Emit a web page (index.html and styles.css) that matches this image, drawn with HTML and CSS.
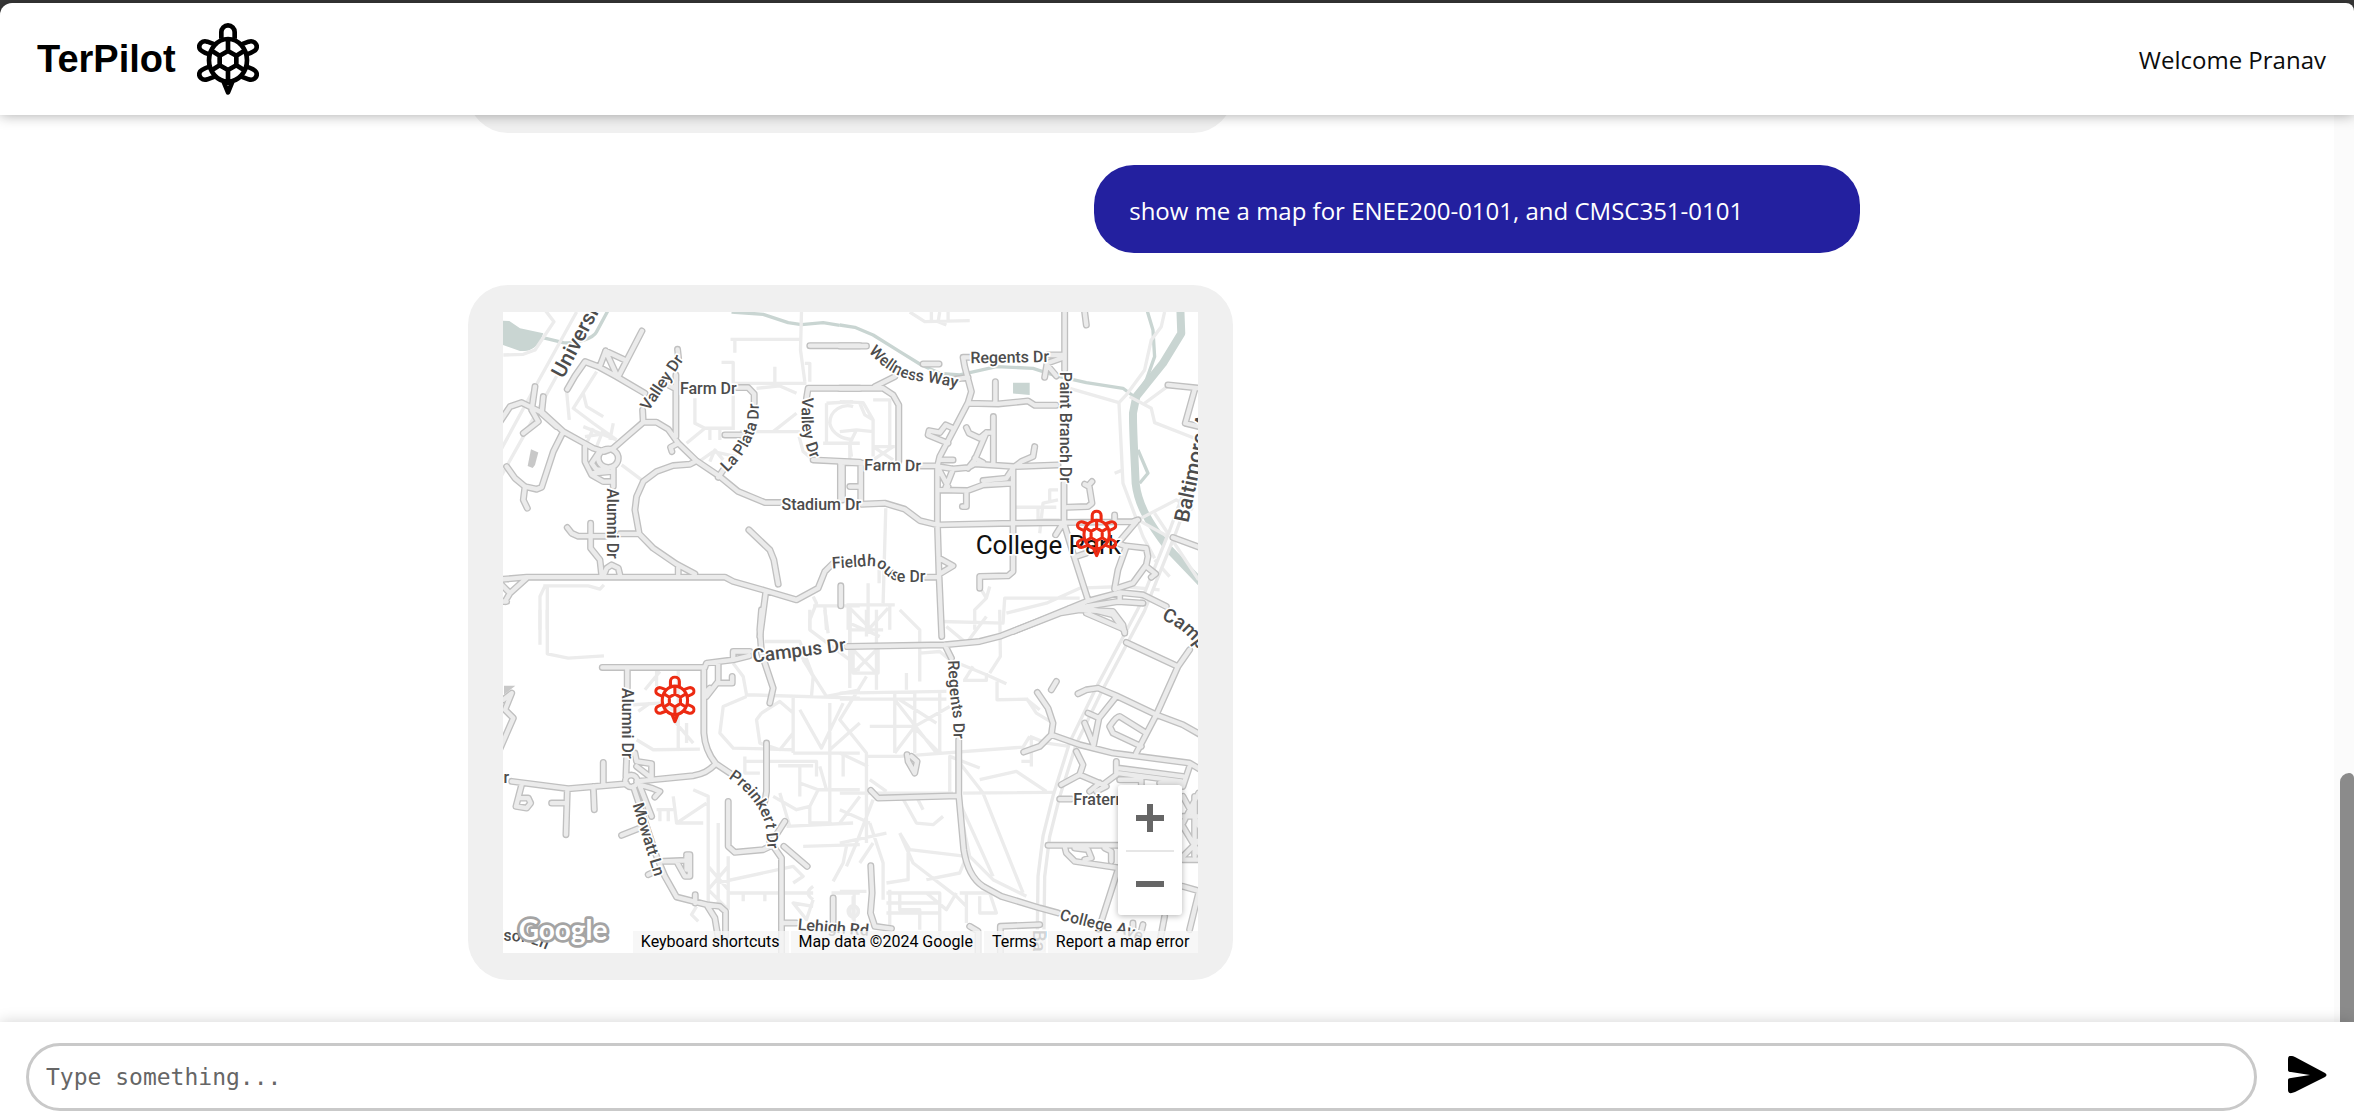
FILE: index.html
```html
<!DOCTYPE html>
<html lang="en">
<head>
<meta charset="utf-8">
<title>TerPilot</title>
<meta name="viewport" content="width=device-width, initial-scale=1">
<link rel="stylesheet" href="styles.css">
</head>
<body>
<svg class="sprite" aria-hidden="true">
  <defs>
    <path id="leg" d="M646 134L622 125C607 120 594 133 599 146C601 152 608 156 628 163"/>
    <symbol id="turtle" viewBox="591 69 186 216">
      <g fill="none" stroke="currentColor" stroke-width="14" stroke-linejoin="round">
        <path d="M664 116V96A20 20 0 0 1 704 96V116"/>
        <ellipse cx="684" cy="181" rx="57" ry="64"/>
        <path d="M684 153L709 167V196L684 210L659 196V167ZM684 153V118M684 210V244M709 167L733 152M709 196L733 211M659 167L635 152M659 196L635 211"/>
        <use href="#leg"/>
        <use href="#leg" transform="translate(1368 0) scale(-1 1)"/>
        <use href="#leg" transform="translate(0 363) scale(1 -1)"/>
        <use href="#leg" transform="translate(1368 363) scale(-1 -1)"/>
        <path d="M672 248L684 277L696 248Z"/>
      </g>
    </symbol>
  </defs>
</svg>
<div class="app">
  <header class="topbar">
    <a class="brand" href="#">TerPilot
      <svg class="brand-icon" aria-hidden="true"><use href="#turtle"/></svg>
    </a>
    <span class="welcome">Welcome Pranav</span>
  </header>

  <main class="main">
    <div class="thread">
      <div class="bubble bubble-bot bubble-past"></div>
      <div class="bubble bubble-user">show me a map for ENEE200-0101, and CMSC351-0101</div>
      <div class="bubble bubble-bot">
        <div class="map">
          <svg class="map-canvas" viewBox="0 0 2088 1923" role="img" aria-label="Map of College Park">
            <defs>
              <g id="roads">
                <path transform="translate(-129 -126)" d="M110 470L150 410L185 398L250 430L310 485L400 535L432 545L460 535L500 500L550 457L590 457L625 478L655 520L710 573L780 620L835 665L915 698H1000M322 358L345 318L375 275L415 290L470 320L555 370M546 183L475 320M420 288L437 243L495 270M437 243L470 315M548 420L550 457M653 238L656 265M648 315V500M655 520L632 532L636 545M625 345L645 355M830 353H865L883 372V400M795 495H860M775 622L790 600M705 575L690 583L640 587L590 605L550 635L530 680L525 720L538 792L580 835L650 883L705 912M538 792H480M310 485L280 545L245 652L230 658L195 650L165 625L140 590M195 650L190 690L202 715M415 565a30 28 0 1 0 60 0a30 28 0 1 0 -60 0M375 530L375 575L395 615L430 635H460M460 590V650M415 550L395 580L410 600L440 595M400 610L455 605M322 773L335 790L355 799H435M392 760V835L420 870L425 915M480 915L475 895L455 885L440 895L432 915M655 915V893M110 930L200 922H795L820 935L915 962L1010 990L1075 955L1095 905L1118 882M135 995L150 970L200 925M120 940L145 965M120 995H140M918 965L900 1100M867 780L930 840L942 870L955 943M1143 948V1008M1200 355H1045L1040 385M1050 227H1200M1060 570L1200 577M1142 575V690M225 350L215 420L235 455L190 490M250 380L245 430L290 470"/>
                <path transform="translate(1011 -126)" d="M675 100V300M673 640V760L700 850L745 990M733 110L740 165M0 228H80M250 282H298M0 355H130L160 375L177 405V575M105 350L165 320M670 255H625M665 265L622 280L615 322M622 285L650 318M345 328L385 322M392 262H370L375 290L395 365L385 398L350 465L300 560L293 590V760L298 920L306 1100M385 400L475 402L565 393L585 406H650M467 335V398M325 520L265 495L268 482L300 488L318 465L340 475M380 473L388 490L420 505L440 488H460M461 440V580M440 488L405 570L385 595M405 565L430 578M0 577L75 580M240 588H290M295 590L340 597L385 593L405 582L525 590L655 585M585 530L580 560L545 575L525 590M293 590L325 650M340 597L315 660M300 570H340M295 660L385 662L430 645L515 640M430 632L500 625L520 595M520 590V905L505 918L420 920V955M380 665V710H368M63 583V690M8 580V690M30 650H60M65 703L135 700L195 718L240 752L293 765L520 760L670 758L880 755L895 750M683 712L745 710L757 700L748 645L757 635M748 650L735 643M670 760L648 795M825 735V755M890 755L835 820L860 830L835 900L825 955M860 828L920 835L925 860L920 885L880 940L825 958M920 890L948 912L935 922M298 865L340 888L300 912M250 922H298M520 1085L740 995L840 968L910 975L980 1010M690 1015L740 1010L835 995L910 1000M840 968V995M740 1015L820 1035L855 1085M710 860L740 850M1100 357L985 345M1065 360L1037 460L1100 475M1000 803L1100 840"/>
                <path transform="translate(-129 894)" d="M905 0L900 60L905 130L940 235L930 280M427 173H735M502 175V235M868 138L820 150L740 160L732 180V370C735 410 750 440 768 462L810 490M870 125H820V150M775 160V215L740 260M775 220H817V200M735 250L750 235M155 515L325 537L500 522M496 514a18 18 0 1 0 36 0a18 18 0 1 0 -36 0M530 515L700 498C730 492 745 485 768 462M430 458V525M400 530L403 600M322 540L318 675M275 580H318M185 525L168 590L200 595L212 580L205 565H178M500 445L498 500M525 430L530 455L575 462V505L530 470M520 530L590 740L615 800L650 862L740 885L765 925L775 985M540 530L575 620M740 885L780 890L797 905V980M706 855V880M585 562L600 545L575 535L540 525M540 655L485 677M610 755L680 752M680 735H690V800H675L650 755M680 740V780M565 795L575 790M920 400V545L915 575M805 575V710L825 728L910 720L935 708M930 695L965 745V1050M970 940H1010M940 690L975 635M972 710L1042 770M1120 865V940M110 440L160 325L135 300L155 250L130 270"/>
                <path transform="translate(1011 894)" d="M315 105L335 145M20 110L315 105L420 95L485 78L660 10L720 0L820 5L850 45L855 70M740 10L845 55M357 390V555L372 720C380 770 400 810 430 830L485 860L600 895L655 910M357 558L115 565L93 542M93 768L97 850L92 910L105 950L155 957M390 950L415 965V1050M600 945L482 950V1050M202 435L205 455L225 490L232 455L215 440M635 240L650 215M593 248L625 295L640 340L635 375L600 410L552 427M635 375L720 405L820 430L1050 460L1100 490M715 252L740 240L775 235L830 258L950 315L1030 345L1100 385M860 98L1015 170M1050 120L1015 170L950 315L890 430M830 260L778 325L745 310M778 325L762 405M735 340L762 405M920 370L840 320Q830 320 810 350L820 370L905 410M665 525L720 495L730 465L710 425M720 495L790 525L830 495V455M835 475L1030 500M835 490L1025 515M1050 470L1030 530M770 545L800 530M780 520L750 545M840 510H905V525M960 520H1020M660 568H695M625 707H835M675 710L680 730L705 755L840 775M705 715L745 720L755 745L735 750M795 715L815 725V755M835 780L785 935M1030 830L1100 850M1077 850L1050 960M975 920L960 1000M880 940V960M910 945L905 965M1030 560L1090 670M1077 550L1030 640M1030 620H1090M1030 650L1090 750M1030 740L1090 680M1030 750H1090M1065 560V740"/>
              </g>
              <g id="highway">
                <path d="M2088 450L2010 660L1916 894L1791 1129L1711 1294L1661 1454L1631 1574L1616 1694L1613 1923"/>
              </g>
              <path id="p-university" d="M310 328L530 -86"/>
              <path id="p-wellness" d="M86 245Q155 325 235 333Q300 338 480 385"/>
              <path id="p-fieldhouse" d="M-23 896L65 890Q108 884 125 900Q150 930 180 936H360"/>
              <path id="p-laplata" d="M802 608Q882 530 896 440L898 340"/>
              <path id="p-valley2" d="M1027 382C1025 450 1020 480 1050 560L1075 640"/>
              <path id="p-preinkert" d="M805 505Q890 560 917 645L930 780"/>
              <path id="p-regents2" d="M325 152Q328 250 340 320L345 480"/>
              <path id="p-collegeave" d="M658 930L800 965Q850 970 890 990L1020 1050"/>
              <path id="p-campus2" d="M965 28Q1030 55 1062 100L1130 190"/>
              <path id="p-windsor" d="M22 995H150Q200 990 280 1030"/>
            </defs>

            <g transform="translate(-129 -126)">
              <path class="water" d="M129 152L148 153L180 175L250 190L240 215C220 240 200 245 180 243L129 225Z"/>
              <path class="stream" d="M248 203L310 218C350 222 400 205 410 185L445 120M815 126L910 133L985 158L1025 164L1090 158L1140 166"/>
              <path class="walk" d="M255 120L282 155L225 240L190 253L130 255M350 126L215 370L120 545M300 300L190 500L120 625M812 208H1025M825 208V248M785 277H820V480M822 340H1040M945 290V345M1025 126L1022 240L1035 335M1035 280H1050V335M320 365L328 450M410 305L340 415L400 460L470 510M370 370L380 410L430 440M705 385V460L735 475H820M680 520L735 475M840 485H1020M940 485L1010 430M890 355L960 348L1010 370M370 470L470 510M375 500L440 490M400 475L380 520M430 480L410 530M460 460L450 510M485 585L545 630M250 948H385L420 958L432 945M240 1080V980L255 948M262 948V1080M1100 400V520M1100 400L1180 395M1110 460C1110 420 1150 400 1180 410M1110 460C1115 490 1150 510 1180 508M1060 570L1030 545L1018 500M1090 520H1200M1170 520V570M750 480V510M780 480V510M750 575L765 540L790 570M710 580L760 545L830 560M1060 980L1070 1000L1050 1050V1080M1060 1008H1200M1095 1010L1100 1080M1170 1010V1080"/>
              <path class="building" d="M213 538L235 548L225 585L218 594L203 588Z"/>
            </g>
            <g transform="translate(1011 -126)">
              <path class="river" d="M1022 110L1025 190L970 280L890 380L880 430C880 500 885 560 888 640C895 700 920 750 990 840L1100 955"/>
              <path class="stream" d="M0 165L45 172L100 195L180 245L245 285L300 310L360 315L470 290L580 295L650 318L740 338L850 355L890 385M922 120L940 180L945 260L920 330L890 380M895 540L925 610L900 640"/>
              <path class="water" d="M520 338H570V375L520 371Z"/>
              <path class="walk" d="M975 126L965 170L935 210L915 300L860 375M860 375L838 398L690 355M838 398L850 640L880 720L910 800L945 865M870 380L935 415L945 458L1065 505M990 345L915 400M895 750L1010 690L1060 720M895 750L985 800M210 126L255 155L390 152M275 126V155M300 126L295 155L320 165M325 126V150M0 395L70 398L100 450V560M100 390H150V530M0 485L50 480L100 485M60 400L75 435L100 450M50 480L30 520L35 560M100 530H165M100 530L160 570M160 530L100 570M138 715L130 1000M118 900V940M20 1005H165M25 1010V1080M150 1005V1080M85 940V1080M30 1015L90 1075L145 1015M525 712H650M600 790L610 700L655 690M595 710V750H660M630 700V660H655M405 1080V1020L440 985L450 950M425 960L440 985M305 1055L490 1060L495 985L720 985M500 1030L620 1000L720 955L850 950L960 960M945 730L1077 930M825 610L850 600M945 870L990 920"/>
            </g>
            <g transform="translate(-129 894)">
              <path class="walk" d="M240 0V105M262 0V132L325 145L432 138M530 390L580 420L720 418M520 285L600 280L640 300M535 305L570 280M555 240L600 185M590 180V230M655 180V415M640 330L700 400M680 340V400M820 160L850 200L860 255L1200 265M860 260L790 290L780 370L820 415L1000 420M905 310L960 275L1000 310V370L960 420L900 400L890 330L905 310M1000 260V430M1020 300L1085 415L1150 280M1055 260L1060 200L1020 130M915 95H1020L1060 200M1050 0V60L1170 150M1095 0L1105 70M1170 0V180H1200M1030 150L1100 260L1200 240M855 440V490H900M855 455H1070V500M955 468H1060M1020 470V560M740 580L650 640H730M590 600H640M600 600V635M625 600V635M640 560L650 640M700 540L745 560V900M775 640V880M805 740V900M745 770L805 840M805 770L745 840M745 840L805 900M805 850H1060M850 850V875M915 850V875M770 820L1000 770L1030 800L1000 820M1030 710L1200 705M1060 830Q1030 850 1060 870M1060 870L1040 930L1000 880L1060 890M1115 850H1200M1180 860V930M1165 905a15 17 0 1 0 30 0a15 17 0 1 0 -30 0M1120 815L1150 760L1160 710M940 560L1010 600L1050 590L1075 540H1200M1050 590V640L1110 640M1075 540L1020 520M1110 280V640M980 650L1180 640M960 550L990 650M710 890L695 915L715 935M1110 420L1200 340M1000 430L1200 430M1150 430V500M1080 470L1100 540"/>
              <path class="building" d="M132 228H166L132 255Z"/>
            </g>
            <g transform="translate(1011 894)">
              <path class="walk" d="M30 0V235M80 0V80M30 60H130M110 0V240M30 40L120 80M30 110H115V190H40V120L110 190M40 190L110 120M0 250L320 245M0 268H320M80 200L0 330L80 430V700M0 430L85 470M75 440H180L550 412L570 380M165 250V430M165 270L290 430M300 250V430L220 350H90M225 250V430M180 270L290 340M165 430L225 350L330 290M0 550H340M370 550L640 548M90 510L140 545M360 460L430 550L550 850M360 580L460 800M420 510L530 485L620 545M330 150L440 195L500 222M370 212H440V190M375 210L400 170M472 215V270L560 268L600 300M480 0L482 140L450 190M320 50L380 100L440 20M240 130L300 125L330 150M200 190V240M240 130V215M180 0L240 60L240 130M560 265L590 310L640 340M575 380V470M545 455H580M570 380L620 400L690 410M360 600L390 740L460 810L560 860M330 550V440L420 475M180 550L230 640L280 645L310 620M230 560L250 600M100 570L50 700L20 770M0 600L90 640M60 560L0 640M0 700L140 670M90 640L130 760V870M180 670L220 760L350 860L380 890M180 670L210 720L380 740L360 790L260 810M205 720V810L140 820M140 850H300V1020M140 880H300M140 910H300M150 840V1020M180 850V900H240V960M360 850H450L470 910H420V860M380 850V940M0 845H80M30 905a13 15 0 1 0 26 0a13 15 0 1 0 -26 0M43 850V940M260 850L320 900L350 850M100 700L60 760"/>
            </g>

            <use class="highway-outer" href="#highway"/>
            <use class="highway-inner" href="#highway"/>
            <use class="road-casing" href="#roads"/>
            <use class="road-fill" href="#roads"/>

            <g class="labels" transform="translate(-129 -126)">
              <text class="label-lg"><textPath href="#p-university">University Blvd</textPath></text>
              <text transform="translate(566 425) rotate(-56)">Valley Dr</text>
              <text x="660" y="371">Farm Dr</text>
              <text><textPath href="#p-laplata">La Plata Dr</textPath></text>
              <text><textPath href="#p-valley2">Valley Dr</textPath></text>
              <text x="965" y="720">Stadium Dr</text>
              <text transform="translate(442 655) rotate(90)">Alumni Dr</text>
            </g>
            <g class="labels" transform="translate(1011 -126)">
              <text><textPath href="#p-wellness">Wellness Way</textPath></text>
              <text transform="translate(392 280) rotate(-1)">Regents Dr</text>
              <text transform="translate(660 305) rotate(90)">Paint Branch Dr</text>
              <text transform="translate(73 601) rotate(1)">Farm Dr</text>
              <text><textPath href="#p-fieldhouse">Fieldhouse Dr</textPath></text>
              <text class="label-lg" transform="translate(1046 760) rotate(-78)">Baltimore Ave</text>
              <text class="label-city" x="408" y="853">College Park</text>
            </g>
            <g class="labels" transform="translate(-129 894)">
              <text class="label-md" transform="translate(880 158) rotate(-7)">Campus Dr</text>
              <text transform="translate(486 235) rotate(90)">Alumni Dr</text>
              <text x="99" y="521">Dr</text>
              <text transform="translate(518 585) rotate(73)">Mowatt Ln</text>
              <text><textPath href="#p-preinkert">Preinkert Dr</textPath></text>
              <text transform="translate(1013 960) rotate(5)">Lehigh Rd</text>
              <text><textPath href="#p-windsor">Windsor Ln</textPath></text>
              <text class="label-google" x="176" y="990">Google</text>
            </g>
            <g class="labels" transform="translate(1011 894)">
              <text><textPath href="#p-regents2">Regents Dr</textPath></text>
              <text class="label-md"><textPath href="#p-campus2">Campus Dr</textPath></text>
              <text x="701" y="587">Fraternity Row</text>
              <text><textPath href="#p-collegeave">College Ave</textPath></text>
              <text class="label-md" transform="translate(580 960) rotate(90)">Baltimore</text>
            </g>
            <g class="markers">
              <use href="#turtle" x="1720" y="593" width="124" height="144"/>
              <use href="#turtle" x="454" y="1091" width="124" height="144"/>
            </g>
          </svg>
          <div class="zoom">
            <button type="button" class="zoom-btn" aria-label="Zoom in">
              <svg class="zoom-icon" viewBox="0 0 28 28"><path d="M11 0h6v11h11v6H17v11h-6V17H0v-6h11z"/></svg>
            </button>
            <button type="button" class="zoom-btn" aria-label="Zoom out">
              <svg class="zoom-icon" viewBox="0 0 28 28"><path d="M0 11h28v6H0z"/></svg>
            </button>
          </div>
          <div class="credits">
            <button type="button" class="credit">Keyboard shortcuts</button>
            <span class="credit">Map data ©2024 Google</span>
            <a class="credit" href="#">Terms</a>
            <a class="credit" href="#">Report a map error</a>
          </div>
        </div>
      </div>
    </div>
    <div class="scroll-track"><div class="scroll-thumb"></div></div>
  </main>

  <form class="composer">
    <input class="composer-input" type="text" placeholder="Type something..." aria-label="Message">
    <button class="send" type="button" aria-label="Send">
      <svg class="send-icon" viewBox="0 0 39 38"><path d="M0 3Q0-1 4 0Q5 0 7 1L37 17Q40 19 37 21L7 36Q0 39 0 34V24Q0 22 3 22L22 19L3 16Q0 16 0 14Z"/></svg>
    </button>
  </form>
</div>
</body>
</html>
```
FILE: styles.css
```css
* {
  box-sizing: border-box;
}

body {
  margin: 0;
  background: #3a3a3a;
  color: #0c0c0c;
  font-family: "Open Sans", "Noto Sans", sans-serif;
  font-size: 24px;
}

button {
  margin: 0;
  padding: 0;
  border: 0;
  background: none;
  color: inherit;
  font: inherit;
}

.sprite {
  position: absolute;
  width: 0;
  height: 0;
}

.app {
  display: flex;
  flex-direction: column;
  height: 100vh;
  padding-top: 3px;
}

.topbar {
  display: flex;
  flex: none;
  align-items: center;
  justify-content: space-between;
  height: 112px;
  padding: 0 28px 0 37px;
  border-radius: 12px 8px 0 0;
  background: #fff;
  box-shadow: 0 0 14px rgba(0, 0, 0, 0.35);
  z-index: 2;
}

.brand {
  display: flex;
  align-items: center;
  gap: 21px;
  color: #000;
  font-family: "Liberation Sans", Arial, sans-serif;
  font-size: 38px;
  font-weight: 700;
  text-decoration: none;
}

.brand-icon {
  width: 62px;
  height: 72px;
}

.main {
  display: flex;
  flex: 1;
  min-height: 0;
  overflow: hidden;
  background: #fff;
}

.thread {
  display: flex;
  flex: 1;
  flex-direction: column;
  justify-content: flex-end;
  gap: 32px;
  max-width: 1392px;
  margin-left: calc(20% - 3px);
  margin-right: auto;
  padding-bottom: 42px;
}

.bubble {
  flex: none;
  width: 55%;
  padding: 27px 35px;
  border-radius: 40px;
}

.bubble-bot {
  background: #f0f0f0;
}

.bubble-past {
  height: 120px;
}

.bubble-user {
  align-self: flex-end;
  padding: 28px 35px 24px;
  background: #23209f;
  color: #fff;
  line-height: 36px;
}

.map {
  position: relative;
  overflow: hidden;
  background: #fff;
}

.map-canvas {
  display: block;
  width: 100%;
}

.water {
  fill: #c9d5d2;
}

.building {
  fill: #c8c8c8;
}

.stream,
.river,
.walk,
.highway-outer,
.highway-inner,
.road-casing,
.road-fill {
  fill: none;
  stroke-linejoin: round;
}

.stream {
  stroke: #c9d5d2;
  stroke-width: 10;
}

.river {
  stroke: #c9d5d2;
  stroke-width: 24;
}

.walk {
  stroke: #ececec;
  stroke-width: 10;
}

.highway-outer {
  stroke: #e9e9e9;
  stroke-width: 30;
}

.highway-inner {
  stroke: #fff;
  stroke-width: 10;
}

.road-casing {
  stroke: #c0c0c0;
  stroke-width: 21;
  stroke-linecap: round;
}

.road-fill {
  stroke: #ebebeb;
  stroke-width: 13;
  stroke-linecap: round;
}

.labels {
  fill: #4c4c4c;
  stroke: #fff;
  stroke-width: 10;
  stroke-linejoin: round;
  paint-order: stroke;
  font-family: Roboto, sans-serif;
  font-size: 48px;
  font-weight: 500;
}

.label-md {
  font-size: 57px;
}

.label-lg {
  font-size: 63px;
}

.label-city {
  fill: #111;
  font-size: 78px;
  font-weight: 400;
}

.label-google {
  fill: #fff;
  stroke: #a4a4a4;
  stroke-width: 17;
  font-family: Lato, sans-serif;
  font-size: 84px;
  font-weight: 700;
}

.markers {
  color: #ec2a12;
}

.zoom {
  position: absolute;
  right: 16px;
  bottom: 38px;
  width: 64px;
  padding: 0 8px;
  border-radius: 3px;
  background: #fff;
  box-shadow: 0 1px 6px rgba(0, 0, 0, 0.3);
}

.zoom-btn {
  display: flex;
  align-items: center;
  justify-content: center;
  width: 100%;
  height: 65px;
}

.zoom-btn + .zoom-btn {
  border-top: 2px solid #e6e6e6;
}

.zoom-icon {
  width: 28px;
  height: 28px;
  fill: #666;
}

.credits {
  position: absolute;
  right: 0;
  bottom: 0;
  display: flex;
  gap: 2px;
  color: #000;
  font-family: Roboto, sans-serif;
  font-size: 16px;
  line-height: 22px;
}

.credit {
  padding: 0 9px 0 8px;
  background: rgba(245, 245, 245, 0.8);
  color: inherit;
  text-decoration: none;
}

.scroll-track {
  display: flex;
  flex: none;
  align-items: flex-end;
  width: 20px;
  padding-left: 6px;
  background: #fbfbfb;
}

.scroll-thumb {
  width: 100%;
  height: 27.5%;
  border-radius: 9px 5px 0 0;
  background: #8b8b8b;
}

.composer {
  display: flex;
  flex: none;
  align-items: center;
  gap: 31px;
  height: 96px;
  padding: 14px 27px 0 26px;
  background: #fff;
  box-shadow: 0 0 14px rgba(0, 0, 0, 0.18);
  z-index: 1;
}

.composer-input {
  flex: 1;
  min-width: 0;
  height: 68px;
  padding: 0 17px;
  border: 3px solid #c9c9c9;
  border-radius: 34px;
  background: #fff;
  color: #222;
  font-family: "DejaVu Sans Mono", monospace;
  font-size: 23px;
}

.composer-input::placeholder {
  color: #666;
}

.send {
  display: flex;
  padding-bottom: 5px;
}

.send-icon {
  width: 39px;
  height: 38px;
}
```
